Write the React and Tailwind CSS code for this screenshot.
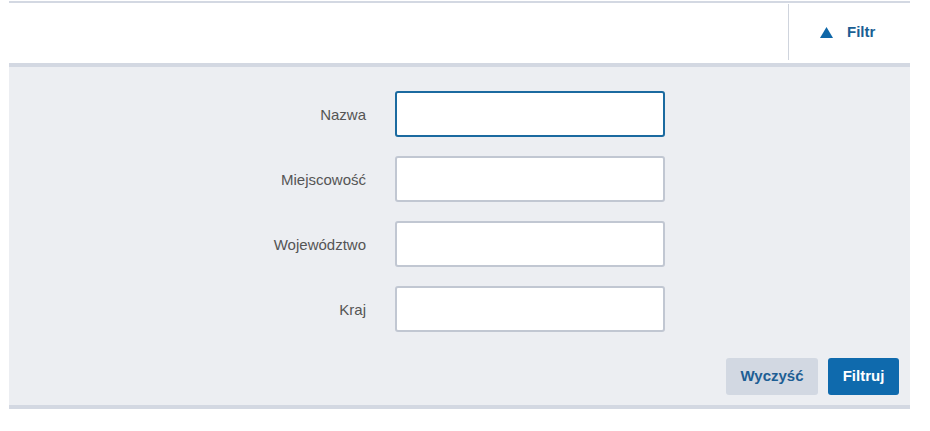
export default function App() {
  const fields = ["Nazwa", "Miejscowość", "Województwo", "Kraj"];
  return (
    <div className="w-[930px] h-[431px] bg-white pt-[1px] pl-[9px]" style={{ fontFamily: '"Liberation Sans", Arial, sans-serif' }}>
      <div className="w-[901px]">
        <div className="h-[60px] border-t-2 border-[#d3d8e2] flex justify-end">
          <div className="w-[122px] mt-[1px] mb-[1px] border-l border-[#cfd4dd] flex items-center pl-[31px] gap-[14px]">
            <svg width="13" height="11" viewBox="0 0 13 11"><polygon points="6.5,0 13,11 0,11" fill="#0f67a8" /></svg>
            <span className="text-[15px] font-bold text-[#1b5f94]">Filtr</span>
          </div>
        </div>
        <div className="mt-[2px] border-t-[4px] border-b-[4px] border-[#d3d8e2] bg-[#eceef2]">
          <div className="pt-[24px] flex flex-col gap-[19px]">
            {fields.map((f, i) => (
              <div key={f} className="flex items-center">
                <div className="w-[357px] pt-[3px] text-right text-[15px] text-[#555]">{f}</div>
                <div
                  className={
                    "ml-[29px] w-[270px] h-[46px] bg-white rounded-[3px] " +
                    (i === 0 ? "border-2 border-[#1b6aa0]" : "border-2 border-[#c1c7d2]")
                  }
                />
              </div>
            ))}
          </div>
          <div className="flex justify-end gap-[10px] pt-[26px] pb-[10px] pr-[11px]">
            <button className="w-[92px] h-[37px] rounded-[3px] bg-[#d2d8e2] text-[15px] font-bold text-[#1d5e94]">Wyczyść</button>
            <button className="w-[71px] h-[37px] rounded-[3px] bg-[#0f6aad] text-[15px] font-bold text-white">Filtruj</button>
          </div>
        </div>
      </div>
    </div>
  );
}
